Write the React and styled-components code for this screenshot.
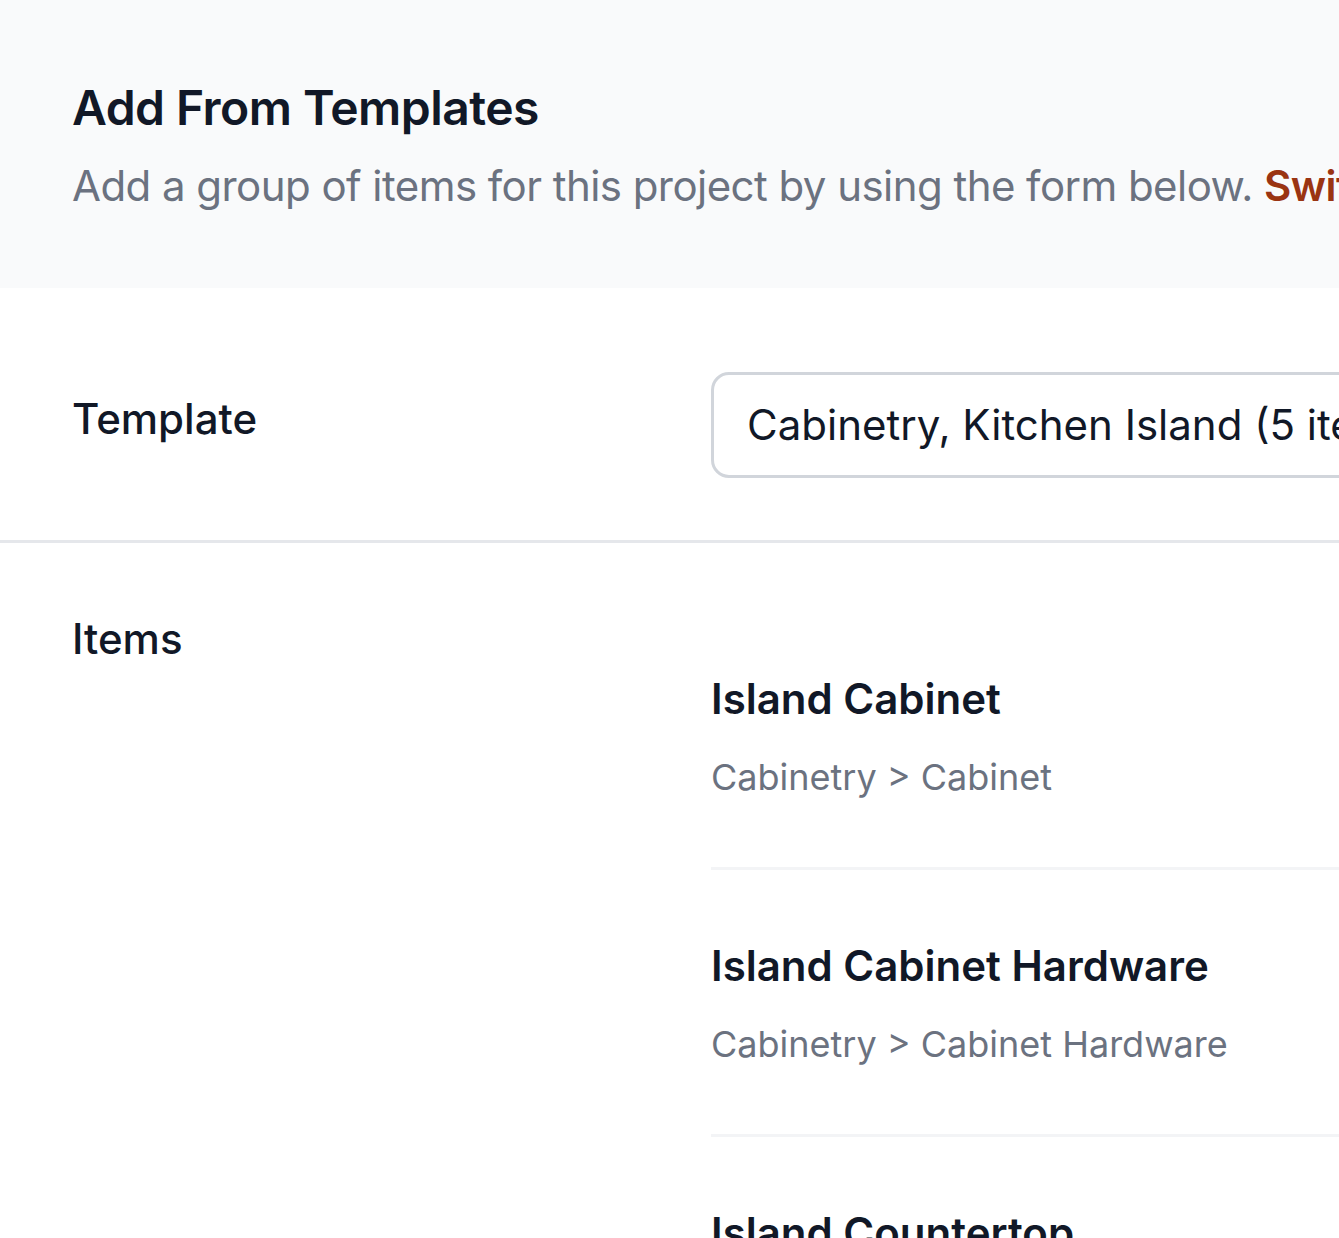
import React from "react";
import styled, { createGlobalStyle } from "styled-components";

const GlobalStyle = createGlobalStyle`
  * {
    box-sizing: border-box;
  }

  body {
    margin: 0;
    overflow: hidden;
    background: #ffffff;
    font-family: Inter, "Noto Sans", "Liberation Sans", sans-serif;
    color: #111827;
  }
`;

const items = [
  { name: "Island Cabinet", path: "Cabinetry > Cabinet" },
  { name: "Island Cabinet Hardware", path: "Cabinetry > Cabinet Hardware" },
  { name: "Island Countertop", path: "Countertops > Countertop" },
  { name: "Island Sink", path: "Plumbing > Sink" },
  { name: "Island Faucet", path: "Plumbing > Faucet" },
];

const App = () => {
  return (
    <Page>
      <GlobalStyle />
      <Header>
        <Title>Add From Templates</Title>
        <Description>
          Add a group of items for this project by using the form below.{" "}
          <SwitchLink href="#">Switch to single item</SwitchLink>
        </Description>
      </Header>

      <FormRow $top={84} $bottom={62} $bordered>
        <Label $offset={11}>Template</Label>
        <Field>
          <SelectBox>
            <SelectValue>Cabinetry, Kitchen Island (5 items)</SelectValue>
            <Chevron viewBox="0 0 20 20" fill="currentColor">
              <path
                fillRule="evenodd"
                d="M10 3a.75.75 0 01.55.24l3.25 3.5a.75.75 0 11-1.1 1.02L10 4.852 7.3 7.76a.75.75 0 01-1.1-1.02l3.25-3.5A.75.75 0 0110 3zm-3.76 9.2a.75.75 0 011.06.04l2.7 2.908 2.7-2.908a.75.75 0 111.1 1.02l-3.25 3.5a.75.75 0 01-1.1 0l-3.25-3.5a.75.75 0 01.04-1.06z"
                clipRule="evenodd"
              />
            </Chevron>
          </SelectBox>
        </Field>
      </FormRow>

      <FormRow $top={60} $bottom={60}>
        <Label $offset={0}>Items</Label>
        <Field>
          <ItemList>
            {items.map((item) => (
              <Item key={item.name}>
                <ItemName>{item.name}</ItemName>
                <ItemPath>{item.path}</ItemPath>
              </Item>
            ))}
          </ItemList>
        </Field>
      </FormRow>
    </Page>
  );
};

export default App;

const Page = styled.div`
  width: 2013px;
`;

const Header = styled.div`
  background-color: #f9fafb;
  padding: 72px 72px;
`;

const Title = styled.h2`
  margin: 0;
  font-size: 48px;
  line-height: 72px;
  font-weight: 600;
  letter-spacing: -0.55px;
  color: #111827;
`;

const Description = styled.p`
  margin: 12px 0 0;
  font-size: 42px;
  line-height: 60px;
  letter-spacing: -0.55px;
  color: #6b7280;
`;

const SwitchLink = styled.a`
  color: #9a3412;
  font-weight: 600;
  text-decoration: none;
`;

const FormRow = styled.div`
  display: grid;
  grid-template-columns: 591px 1230px;
  column-gap: 48px;
  align-items: start;
  padding: ${(props) => props.$top}px 72px ${(props) => props.$bottom}px;
  border-bottom: ${(props) =>
    props.$bordered ? "3px solid #e5e7eb" : "none"};
`;

const Label = styled.label`
  display: block;
  padding-top: ${(props) => props.$offset}px;
  font-size: 42px;
  line-height: 72px;
  font-weight: 500;
  color: #111827;
`;

const Field = styled.div`
  min-width: 0;
`;

const SelectBox = styled.div`
  display: flex;
  align-items: center;
  justify-content: space-between;
  height: 106px;
  padding: 0 30px 0 33px;
  border: 3px solid #d1d5db;
  border-radius: 18px;
  background: #ffffff;
`;

const SelectValue = styled.span`
  font-size: 42px;
  line-height: 72px;
  color: #111827;
  white-space: nowrap;
`;

const Chevron = styled.svg`
  width: 60px;
  height: 60px;
  color: #9ca3af;
  flex-shrink: 0;
`;

const ItemList = styled.ul`
  list-style: none;
  margin: 0;
  padding: 0;
`;

const Item = styled.li`
  padding: 60px 0;

  & + & {
    border-top: 3px solid #f3f4f6;
  }
`;

const ItemName = styled.div`
  font-size: 42px;
  line-height: 72px;
  font-weight: 600;
  color: #111827;
`;

const ItemPath = styled.div`
  margin-top: 12px;
  font-size: 36px;
  line-height: 60px;
  color: #6b7280;
`;
